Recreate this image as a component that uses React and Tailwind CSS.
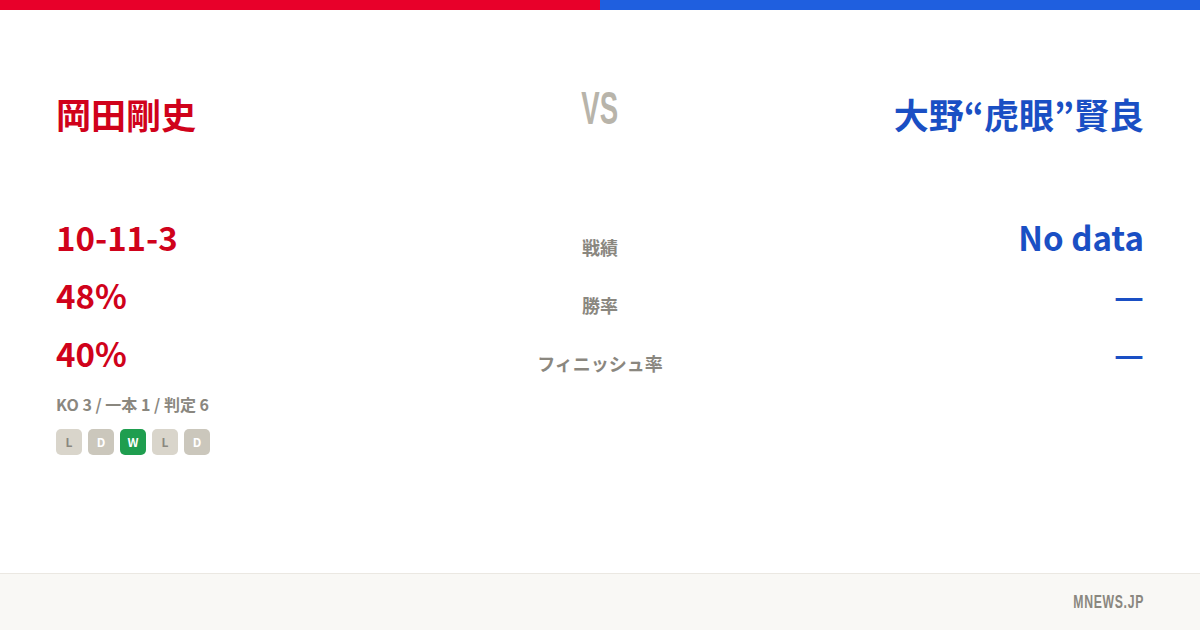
export default function App() {
  const jp = { fontFamily: '"Noto Sans CJK JP", "Noto Sans", sans-serif' };
  const cond = { fontFamily: '"Liberation Sans", Arial, sans-serif' };
  const form = [
    { r: 'L', c: 'bg-[#d9d5cb] text-[#8a877f]' },
    { r: 'D', c: 'bg-[#cbc7bc] text-white' },
    { r: 'W', c: 'bg-[#1f9e4f] text-white' },
    { r: 'L', c: 'bg-[#d9d5cb] text-[#8a877f]' },
    { r: 'D', c: 'bg-[#cbc7bc] text-white' },
  ];
  const rows = [
    { label: '戦績', left: '10-11-3', right: 'No data' },
    { label: '勝率', left: '48%', right: '—' },
    { label: 'フィニッシュ率', left: '40%', right: '—' },
  ];

  return (
    <div className="w-[1200px] h-[630px] bg-white flex flex-col" style={jp}>
      {/* top bar */}
      <div className="flex h-[10px]">
        <div className="flex-1 bg-[#e8002a]" />
        <div className="flex-1 bg-[#1f5fdf]" />
      </div>

      <div className="flex-1 px-[56px]">
        {/* names */}
        <div className="grid grid-cols-3 items-center h-[198px] pt-[8px]">
          <div className="text-[35px] font-bold text-[#d0021b] leading-none">岡田剛史</div>
          <div className="flex justify-center -mt-[10px]">
            <span className="inline-block text-[46px] font-bold text-[#b8b4aa] leading-none scale-x-[0.6]" style={cond}>VS</span>
          </div>
          <div className="text-right text-[35px] font-bold text-[#1a4fc4] leading-none">大野“虎眼”賢良</div>
        </div>

        {/* stats */}
        <div className="flex flex-col">
          {rows.map((row) => (
            <div key={row.label} className="grid grid-cols-3 items-center h-[58px]">
              <div className="text-[33px] font-bold text-[#d0021b] leading-none">{row.left}</div>
              <div className="text-center text-[18px] font-bold text-[#8a877f] leading-none pt-[20px]">{row.label}</div>
              <div className="text-right text-[33px] font-bold text-[#1a4fc4] leading-none">{row.right}</div>
            </div>
          ))}
        </div>

        <div className="mt-[14px] text-[16px] font-bold text-[#8a877f] leading-none">KO 3 / 一本 1 / 判定 6</div>
        <div className="flex gap-[6px] mt-[17px]">
          {form.map((f, i) => (
            <div key={i} className={`w-[26px] h-[26px] rounded-[5px] flex items-center justify-center text-[12px] font-bold ${f.c}`}>
              {f.r}
            </div>
          ))}
        </div>
      </div>

      {/* footer */}
      <div className="h-[57px] bg-[#f9f8f5] border-t border-[#ebe8e2] flex items-center justify-end px-[56px]">
        <span className="inline-block text-[18px] font-bold text-[#8a877f] tracking-[1px] origin-right scale-x-[0.68]" style={cond}>MNEWS.JP</span>
      </div>
    </div>
  );
}
